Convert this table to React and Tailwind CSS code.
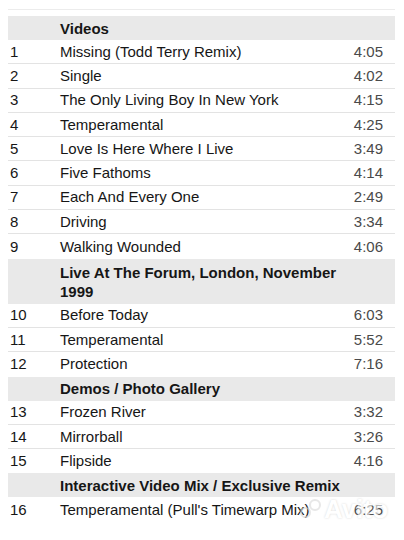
import React from 'react';

const sections = [
  {
    title: 'Videos',
    tracks: [
      ['1', 'Missing (Todd Terry Remix)', '4:05'],
      ['2', 'Single', '4:02'],
      ['3', 'The Only Living Boy In New York', '4:15'],
      ['4', 'Temperamental', '4:25'],
      ['5', 'Love Is Here Where I Live', '3:49'],
      ['6', 'Five Fathoms', '4:14'],
      ['7', 'Each And Every One', '2:49'],
      ['8', 'Driving', '3:34'],
      ['9', 'Walking Wounded', '4:06'],
    ],
  },
  {
    title: 'Live At The Forum, London, November 1999',
    tracks: [
      ['10', 'Before Today', '6:03'],
      ['11', 'Temperamental', '5:52'],
      ['12', 'Protection', '7:16'],
    ],
  },
  {
    title: 'Demos / Photo Gallery',
    tracks: [
      ['13', 'Frozen River', '3:32'],
      ['14', 'Mirrorball', '3:26'],
      ['15', 'Flipside', '4:16'],
    ],
  },
  {
    title: 'Interactive Video Mix / Exclusive Remix',
    tracks: [['16', "Temperamental (Pull's Timewarp Mix)", '6:25']],
  },
];

export default function App() {
  return (
    <div className="relative w-[404px] h-[540px] bg-white overflow-hidden font-['Liberation_Sans',Arial,sans-serif] text-[15px] text-[#161616]">
      <div className="mx-[8px] mt-[9px] w-[387px] border-t border-[#ececec]">
        <div className="h-[6px]" />
        {sections.map((s, si) => (
          <div key={si}>
            <div className="grid grid-cols-[52px_286px_1fr] bg-[#e9e9e9]">
              <div />
              <div className={`font-bold leading-[19px] ${s.title.startsWith('Live') ? 'pt-[4px] pb-[3px]' : 'py-[2.5px]'}`}>
                {s.title}
              </div>
              <div />
            </div>
            {s.tracks.map((t, ti) => (
              <div
                key={ti}
                className={`grid grid-cols-[52px_1fr_60px] items-center h-[24.3px] ${ti < s.tracks.length - 1 ? 'border-b border-[#e3e3e3]' : ''}`}
              >
                <div className="pl-[2px] leading-[18px]">{t[0]}</div>
                <div className="leading-[18px] whitespace-nowrap">{t[1]}</div>
                <div className="text-right pr-[12px] leading-[18px] text-[#4a4a4a]">{t[2]}</div>
              </div>
            ))}
          </div>
        ))}
      </div>
      <div className="absolute left-[300px] top-[496px] flex items-center gap-[2px] opacity-60 pointer-events-none">
        <div className="relative w-[22px] h-[22px]">
          <div className="absolute left-0 top-[9px] w-[11px] h-[11px] rounded-full border-2 border-[#d8d8d8]" />
          <div className="absolute left-[9px] top-[1px] w-[12px] h-[12px] rounded-full border-2 border-[#d8d8d8]" />
        </div>
        <span className="text-[26px] font-bold text-white [text-shadow:0_0_2px_#bbb] leading-none">Avito</span>
      </div>
    </div>
  );
}
